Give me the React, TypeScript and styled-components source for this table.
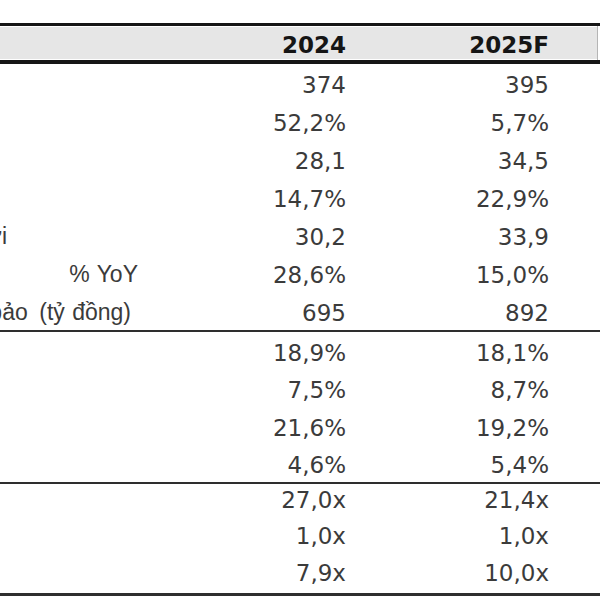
import styled, { createGlobalStyle } from "styled-components";

type Row = { label?: string; end?: number; v2024: string; v2025: string };

const sections: { rows: Row[]; height: number; shift: number }[] = [
  {
    height: 38,
    shift: 3,
    rows: [
      { v2024: "374", v2025: "395" },
      { v2024: "52,2%", v2025: "5,7%" },
      { v2024: "28,1", v2025: "34,5" },
      { v2024: "14,7%", v2025: "22,9%" },
      { label: "Lợi nhuận sinh lợi", end: 143, v2024: "30,2", v2025: "33,9" },
      { label: "% YoY", end: 12, v2024: "28,6%", v2025: "15,0%" },
      { label: "Cổ tức đảm bảo\u2002(tỷ đồng)", end: 19, v2024: "695", v2025: "892" },
    ],
  },
  {
    height: 37.5,
    shift: 4,
    rows: [
      { v2024: "18,9%", v2025: "18,1%" },
      { v2024: "7,5%", v2025: "8,7%" },
      { v2024: "21,6%", v2025: "19,2%" },
      { v2024: "4,6%", v2025: "5,4%" },
    ],
  },
  {
    height: 36.3,
    shift: -4,
    rows: [
      { v2024: "27,0x", v2025: "21,4x" },
      { v2024: "1,0x", v2025: "1,0x" },
      { v2024: "7,9x", v2025: "10,0x" },
    ],
  },
];

export default function App() {
  return (
    <>
      <GlobalStyle />
      <Page>
        <Sheet>
          <HeaderRow>
            <HeadCell />
            <HeadCell $padRight={6}>2024</HeadCell>
            <HeadCell $padRight={48}>2025F</HeadCell>
            <HeadCell $blank />
          </HeaderRow>
          {sections.map((section, si) => (
            <Section key={si} $last={si === sections.length - 1}>
              {section.rows.map((row, ri) => (
                <BodyRow key={ri} $height={section.height} $shift={section.shift}>
                  <Label $end={row.end ?? 0}>
                    {row.label && <span>{row.label}</span>}
                  </Label>
                  <Value $padRight={6}>{row.v2024}</Value>
                  <Value $padRight={48}>{row.v2025}</Value>
                  <Value $padRight={0} />
                </BodyRow>
              ))}
            </Section>
          ))}
        </Sheet>
      </Page>
    </>
  );
}

const GlobalStyle = createGlobalStyle`
  html, body {
    margin: 0;
    padding: 0;
    background: #ffffff;
  }
`;

const Page = styled.div`
  width: 600px;
  height: 600px;
  overflow: hidden;
  background: #ffffff;
  font-family: "DejaVu Sans", "Liberation Sans", sans-serif;
  font-size: 23px;
  color: #3b3b3b;
`;

const Sheet = styled.div`
  padding-top: 23px;
  display: flex;
  flex-direction: column;
`;

const columns = "150px 202px 245px 1fr";

const HeaderRow = styled.div`
  display: grid;
  grid-template-columns: ${columns};
  border-top: 3px solid #161616;
  border-bottom: 4px solid #161616;
  height: 34px;
`;

const HeadCell = styled.div<{ $padRight?: number; $blank?: boolean }>`
  display: flex;
  align-items: center;
  justify-content: flex-end;
  padding-right: ${(p) => p.$padRight ?? 0}px;
  padding-top: 3px;
  background: ${(p) => (p.$blank ? "#ffffff" : "#e6e6e6")};
  box-shadow: inset 0 1px 0 #ffffff, inset 0 -1px 0 #ffffff;
  border-left: ${(p) => (p.$blank ? "1px solid #b5b5b5" : "none")};
  font-weight: bold;
  color: #151515;
`;

const Section = styled.div<{ $last: boolean }>`
  border-bottom: ${(p) => (p.$last ? "3px" : "2px")} solid #2e2e2e;
`;

const BodyRow = styled.div<{ $height: number; $shift: number }>`
  display: grid;
  grid-template-columns: ${columns};
  height: ${(p) => p.$height}px;
  box-sizing: border-box;
  padding-top: ${(p) => Math.max(p.$shift, 0)}px;
  padding-bottom: ${(p) => Math.max(-p.$shift, 0)}px;
`;

const Label = styled.div<{ $end: number }>`
  display: flex;
  align-items: center;
  justify-content: flex-end;
  overflow: hidden;
  white-space: nowrap;
  padding-right: ${(p) => p.$end}px;
  font-family: "Liberation Sans", "DejaVu Sans", sans-serif;
  word-spacing: 1px;
`;

const Value = styled.div<{ $padRight: number }>`
  display: flex;
  align-items: center;
  justify-content: flex-end;
  padding-right: ${(p) => p.$padRight}px;
  white-space: nowrap;
`;
